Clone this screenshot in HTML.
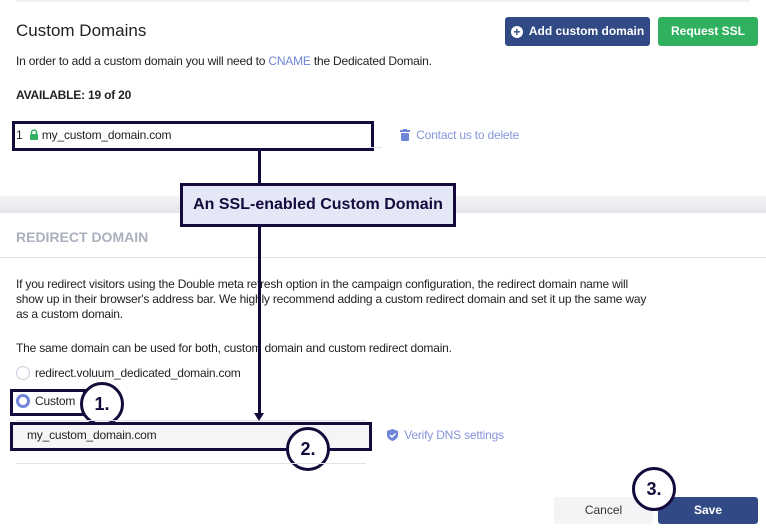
<!DOCTYPE html>
<html><head><style>
body{margin:0;width:766px;height:532px;position:relative;background:#fff;font-family:"Liberation Sans",sans-serif;overflow:hidden;color:#222}
.a{position:absolute}
.t{font-size:12px;letter-spacing:-0.2px}
.btn{position:absolute;color:#fff;font-weight:bold;font-size:12px;border-radius:3px;text-align:center;line-height:29px}
.circ{position:absolute;width:44px;height:44px;border:3px solid #150a3c;border-radius:50%;background:#fff;box-sizing:border-box;font-weight:bold;font-size:18px;text-align:center;line-height:38px;color:#150a3c}
</style></head><body>
<div class="a" style="left:16px;top:0;width:734px;height:2px;background:#eef0f5"></div>
<div class="a" style="left:16px;top:21px;font-size:17px;color:#222">Custom Domains</div>
<div class="btn" style="left:505px;top:17px;width:145px;height:29px;background:#314a86"><span style="display:inline-block;width:12px;height:12px;border-radius:50%;background:#fff;color:#314a86;line-height:12px;font-size:12px;margin-right:6px;vertical-align:-1px">+</span>Add custom domain</div>
<div class="btn" style="left:658px;top:17px;width:100px;height:29px;background:#2fb15f">Request SSL</div>
<div class="a t" style="left:16px;top:54px">In order to add a custom domain you will need to <span style="color:#6f85d8">CNAME</span> the Dedicated Domain.</div>
<div class="a t" style="left:16px;top:88px;font-weight:bold">AVAILABLE: 19 of 20</div>
<div class="a" style="left:12px;top:121px;width:356px;height:24px;border:3px solid #150a3c"></div>
<div class="a" style="left:368px;top:147px;width:14px;height:1px;background:#e0e3ea"></div>
<div class="a t" style="left:16px;top:128px">1 &nbsp;<svg width="10" height="11" viewBox="0 0 10 11" style="vertical-align:-1px"><path d="M2.5 5V3.5a2.5 2.5 0 0 1 5 0V5" fill="none" stroke="#2fb15f" stroke-width="1.6"/><rect x="1" y="5" width="8" height="6" rx="1" fill="#2fb15f"/></svg> my_custom_domain.com</div>
<div class="a t" style="left:400px;top:128px;color:#8596dc"><svg width="10" height="12" viewBox="0 0 10 12" style="vertical-align:-2px"><rect x="0" y="1" width="10" height="2" fill="#6f85d8"/><rect x="3" y="0" width="4" height="1" fill="#6f85d8"/><rect x="1" y="4" width="8" height="8" rx="1" fill="#6f85d8"/></svg>&nbsp;&nbsp;Contact us to delete</div>
<div class="a" style="left:0;top:196px;width:766px;height:17px;background:linear-gradient(#f3f4f6,#e4e6ea)"></div>
<div class="a" style="left:16px;top:229px;font-size:14px;font-weight:bold;color:#aab0bd">REDIRECT DOMAIN</div>
<div class="a" style="left:0;top:257px;width:766px;height:1px;background:#e0e3ea"></div>
<div class="a t" style="left:16px;top:277px;line-height:15px;width:640px">If you redirect visitors using the Double meta refresh option in the campaign configuration, the redirect domain name will show up in their browser's address bar. We highly recommend adding a custom redirect domain and set it up the same way as a custom domain.</div>
<div class="a t" style="left:16px;top:341px">The same domain can be used for both, custom domain and custom redirect domain.</div>
<div class="a" style="left:16px;top:366px;width:12px;height:12px;border:1px solid #ccd;border-radius:50%"></div>
<div class="a t" style="left:35px;top:366px">redirect.voluum_dedicated_domain.com</div>
<div class="a" style="left:10px;top:389px;width:70px;height:21px;border:3px solid #150a3c"></div>
<div class="a" style="left:16px;top:394px;width:8px;height:8px;border:3px solid #6f85d8;border-radius:50%;background:#fff"></div>
<div class="a t" style="left:35px;top:394px">Custom</div>
<div class="circ" style="left:80px;top:382px">1.</div>
<div class="a" style="left:16px;top:420px;width:350px;height:1px;background:#dde"></div>
<div class="a" style="left:10px;top:422px;width:356px;height:23px;border:3px solid #150a3c;background:#f4f5f7"></div>
<div class="a t" style="left:27px;top:428px">my_custom_domain.com</div>
<div class="circ" style="left:286px;top:427px">2.</div>
<div class="a" style="left:16px;top:463px;width:350px;height:1px;background:#e0e3ea"></div>
<div class="a t" style="left:387px;top:428px;color:#8596dc"><svg width="11" height="12" viewBox="0 0 11 12" style="vertical-align:-2px"><path d="M5.5 0L11 2v4c0 3-2.5 5-5.5 6C2.5 11 0 9 0 6V2z" fill="#6f85d8"/><path d="M3 6l2 2 3.5-3.5" fill="none" stroke="#fff" stroke-width="1.5"/></svg>&nbsp; Verify DNS settings</div>
<div class="btn" style="left:554px;top:497px;width:99px;height:27px;background:#f3f4f6;color:#333;font-weight:normal;line-height:27px">Cancel</div>
<div class="btn" style="left:658px;top:497px;width:100px;height:27px;background:#314a86;line-height:27px">Save</div>
<div class="circ" style="left:632px;top:467px">3.</div>
<div class="a" style="left:258px;top:148px;width:3px;height:36px;background:#150a3c"></div>
<div class="a" style="left:258px;top:227px;width:3px;height:190px;background:#150a3c"></div>
<div class="a" style="left:254px;top:413px;width:0;height:0;border-left:5px solid transparent;border-right:5px solid transparent;border-top:8px solid #150a3c"></div>
<div class="a" style="left:180px;top:183px;width:270px;height:38px;border:3px solid #150a3c;background:#e4e8f6;font-weight:bold;font-size:16px;color:#150a3c;text-align:center;line-height:38px">An SSL-enabled Custom Domain</div>
</body></html>
